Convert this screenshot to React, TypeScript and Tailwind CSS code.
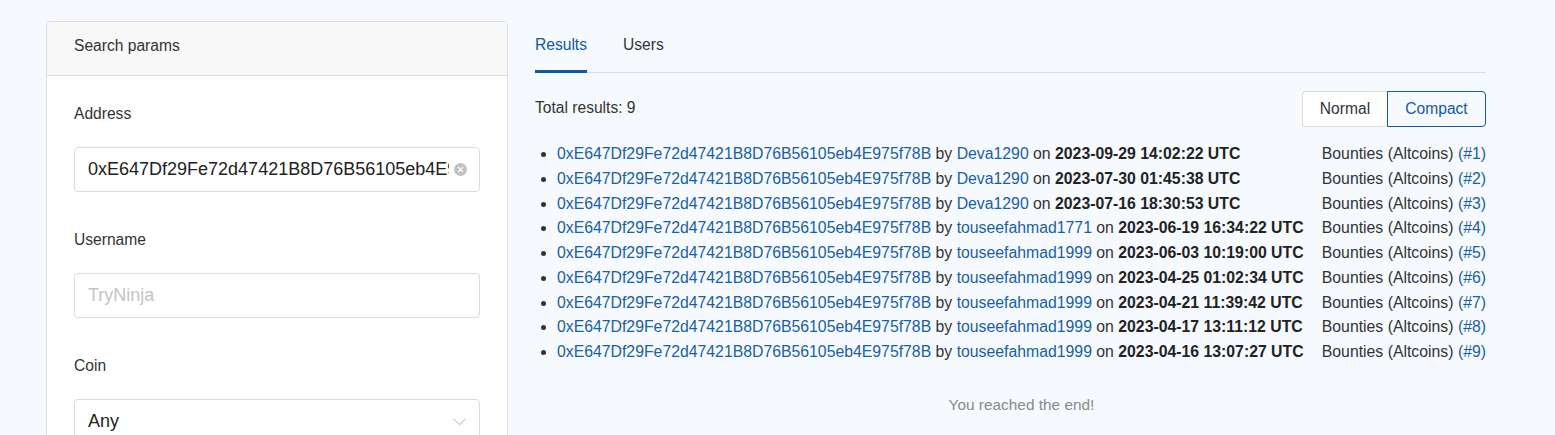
import { useState } from "react";

const address = "0xE647Df29Fe72d47421B8D76B56105eb4E975f78B";

const rows = [
  { user: "Deva1290", date: "2023-09-29 14:02:22 UTC" },
  { user: "Deva1290", date: "2023-07-30 01:45:38 UTC" },
  { user: "Deva1290", date: "2023-07-16 18:30:53 UTC" },
  { user: "touseefahmad1771", date: "2023-06-19 16:34:22 UTC" },
  { user: "touseefahmad1999", date: "2023-06-03 10:19:00 UTC" },
  { user: "touseefahmad1999", date: "2023-04-25 01:02:34 UTC" },
  { user: "touseefahmad1999", date: "2023-04-21 11:39:42 UTC" },
  { user: "touseefahmad1999", date: "2023-04-17 13:11:12 UTC" },
  { user: "touseefahmad1999", date: "2023-04-16 13:07:27 UTC" },
];

function Field({ label, children }: { label: string; children: React.ReactNode }) {
  return (
    <div className="flex flex-col">
      <label className="leading-[24px] text-[15.6px] text-[#333]">{label}</label>
      <div className="mt-[21px]">{children}</div>
    </div>
  );
}

export default function App() {
  const [tab, setTab] = useState("results");
  const [mode, setMode] = useState("compact");

  return (
    <main
      className="min-h-screen bg-[#f6f9fe] text-[#333] flex items-start gap-[27px] pt-[21px] pl-[46px]"
      style={{ fontFamily: '"Liberation Sans", Arial, sans-serif' }}
    >
      <section className="w-[462px] shrink-0 bg-white border border-[#dedede] rounded-[4px] overflow-hidden">
        <div className="h-[54px] bg-[#f8f8f8] border-b border-[#dedede] flex items-center px-[27px] text-[15.6px] pb-[5px]">
          Search params
        </div>
        <div className="flex flex-col gap-[36px] px-[27px] pt-[26px] pb-[28px]">
          <Field label="Address">
            <div className="relative">
              <input
                readOnly
                value={address}
                className="w-full h-[45px] border border-[#dcdcdc] rounded-[4px] bg-white pl-[13px] pr-[30px] text-[18px] text-[#222] outline-none"
              />
              <svg className="absolute right-[13px] top-[16px]" width="13" height="13" viewBox="0 0 13 13">
                <circle cx="6.5" cy="6.5" r="6.5" fill="#c2c2c2" />
                <path d="M4.4 4.4 L8.6 8.6 M8.6 4.4 L4.4 8.6" stroke="#fff" strokeWidth="1.3" strokeLinecap="round" />
              </svg>
            </div>
          </Field>
          <Field label="Username">
            <input
              placeholder="TryNinja"
              className="w-full h-[45px] border border-[#dcdcdc] rounded-[4px] bg-white px-[13px] text-[18px] placeholder:text-[#c4c4c4] outline-none"
            />
          </Field>
          <Field label="Coin">
            <div className="h-[45px] border border-[#dcdcdc] rounded-[4px] bg-white pl-[13px] pr-[13px] flex items-center justify-between text-[18px] text-[#222]">
              <span>Any</span>
              <svg width="13" height="8" viewBox="0 0 13 8">
                <path d="M0.5 0.8 L6.5 6.8 L12.5 0.8" fill="none" stroke="#b0b0b0" strokeWidth="1" />
              </svg>
            </div>
          </Field>
        </div>
      </section>

      <section className="w-[951px] shrink-0 text-[15.6px]">
        <nav className="flex gap-[36px] border-b border-[#dddddd]">
          <button
            onClick={() => setTab("results")}
            className={`pt-[12px] pb-[13px] leading-[24px] border-b-[3px] -mb-px ${tab === "results" ? "border-[#0d5aa3] text-[#0d5aa3]" : "border-transparent text-[#333]"}`}
          >
            Results
          </button>
          <button
            onClick={() => setTab("users")}
            className={`pt-[12px] pb-[13px] leading-[24px] border-b-[3px] -mb-px ${tab === "users" ? "border-[#0d5aa3] text-[#0d5aa3]" : "border-transparent text-[#333]"}`}
          >
            Users
          </button>
        </nav>

        <div className="mt-[18px] flex justify-between items-start">
          <span className="leading-[24px] pt-[5px]">Total results: 9</span>
          <div className="flex h-[36px]">
            <button
              onClick={() => setMode("normal")}
              className={`w-[85px] rounded-l-[4px] border bg-white ${mode === "normal" ? "border-[#155a9d] text-[#155a9d]" : "border-[#dcdcdc] border-r-0 text-[#333]"}`}
            >
              Normal
            </button>
            <button
              onClick={() => setMode("compact")}
              className={`w-[99px] rounded-r-[4px] border ${mode === "compact" ? "border-[#155a9d] text-[#155a9d]" : "border-[#dcdcdc] border-l-0 text-[#333] bg-white"}`}
            >
              Compact
            </button>
          </div>
        </div>

        <ul className="mt-[15px] list-disc pl-[22px] leading-[24.75px] text-[15.8px] marker:text-[#333]">
          {rows.map((r, i) => (
            <li key={i}>
              <span className="float-right">
                Bounties (Altcoins) <a className="text-[#195fa3]">(#{i + 1})</a>
              </span>
              <a className="text-[#195fa3]">{address}</a> by <a className="text-[#195fa3]">{r.user}</a> on{" "}
              <b className="font-bold text-[#222]">{r.date}</b>
            </li>
          ))}
        </ul>

        <p className="mt-[28px] pl-[22px] text-center text-[15.4px] leading-[24px] text-[#8a8a8a]">You reached the end!</p>
      </section>
    </main>
  );
}
